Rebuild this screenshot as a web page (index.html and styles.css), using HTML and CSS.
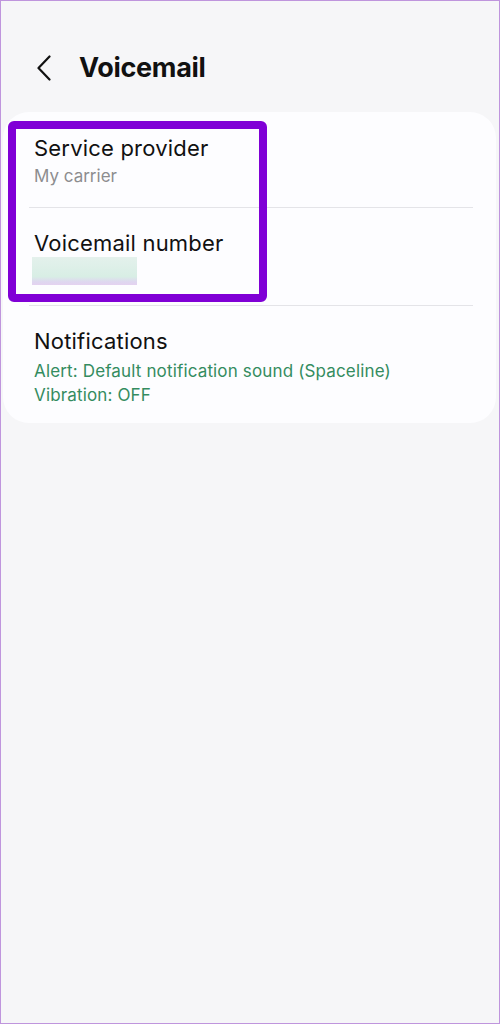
FILE: index.html
```html
<!DOCTYPE html>
<html lang="en">
<head>
<meta charset="utf-8">
<title>Voicemail</title>
<link rel="stylesheet" href="styles.css">
</head>
<body>
<div class="screen">
  <header class="topbar">
    <span class="back" aria-label="Back">
      <svg width="16" height="26" viewBox="0 0 16 26"><path d="M13.5 1.5 L2.5 13 L13.5 24.5" fill="none" stroke="#111" stroke-width="2.2" stroke-linecap="round" stroke-linejoin="round"/></svg>
    </span>
    <h1 class="title">Voicemail</h1>
  </header>
  <section class="card">
    <div class="row">
      <div class="row-title">Service provider</div>
      <div class="row-sub">My carrier</div>
    </div>
    <div class="divider"></div>
    <div class="row">
      <div class="row-title">Voicemail number</div>
      <div class="blurred"></div>
    </div>
    <div class="divider"></div>
    <div class="row row-last">
      <div class="row-title">Notifications</div>
      <div class="row-green">Alert: Default notification sound (Spaceline)</div>
      <div class="row-green">Vibration: OFF</div>
    </div>
    <div class="highlight"></div>
  </section>
</div>
</body>
</html>
```
FILE: styles.css
```css
html, body {
  margin: 0;
  padding: 0;
}
body {
  font-family: Inter, Roboto, "Noto Sans", sans-serif;
  color: #111;
}
.screen {
  width: 500px;
  height: 1024px;
  box-sizing: border-box;
  border: 1px solid #bf95dd;
  background: #f6f6f8;
  overflow: hidden;
}
.topbar {
  display: flex;
  align-items: center;
  height: 36px;
  padding: 49px 0 0 35px;
}
.back {
  display: flex;
  width: 16px;
  height: 26px;
}
.title {
  margin: 0 0 0 27px;
  font-size: 27px;
  line-height: 36px;
  font-weight: 700;
  letter-spacing: -0.3px;
}
.card {
  position: relative;
  margin: 26px 3px 0 2px;
  background: #fdfdff;
  border-radius: 26px;
  padding: 1px 0 0;
}
.row {
  padding: 21px 28px 20px 31px;
}
.row-last {
  padding-bottom: 16px;
}
.row-title {
  font-size: 22px;
  line-height: 28px;
  letter-spacing: 0.2px;
}
.row-sub {
  margin-top: 3px;
  font-size: 17px;
  line-height: 22px;
  color: #8d8d8f;
}
.row-green {
  font-size: 17px;
  line-height: 24px;
  letter-spacing: 0.15px;
  color: #348c60;
}
.row-title + .row-green {
  margin-top: 4px;
}
.blurred {
  width: 105px;
  height: 28px;
  margin-left: -2px;
  background: linear-gradient(to bottom, #e4f1ec 0%, #d8eee5 70%, #ded7ef 88%, #e4d2f0 100%);
}
.divider {
  height: 1px;
  margin: 0 23px 0 26px;
  background: #e4e4e8;
}
.highlight {
  position: absolute;
  left: 5px;
  top: 9px;
  width: 243px;
  height: 165px;
  border: 8px solid #8000d6;
  border-radius: 6px;
}
```
